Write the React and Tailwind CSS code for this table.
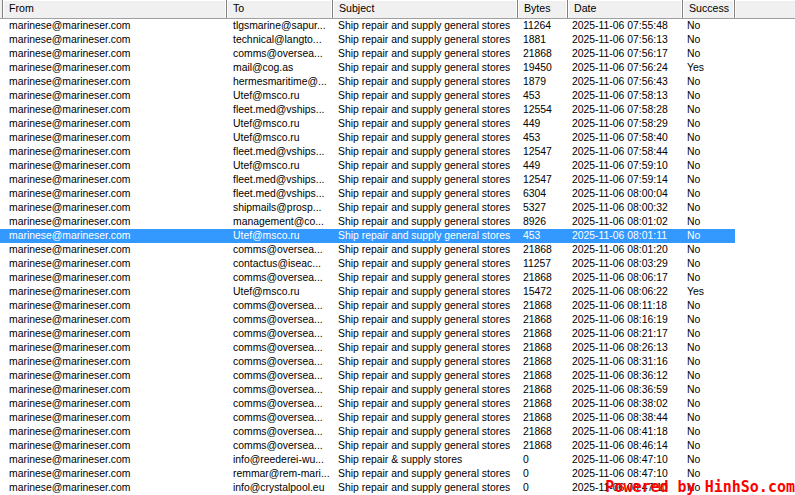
import React from "react";

const cols = [
  { key: "from", label: "From", w: "w-[224px]" },
  { key: "to", label: "To", w: "w-[106px]" },
  { key: "subject", label: "Subject", w: "w-[185px]" },
  { key: "bytes", label: "Bytes", w: "w-[50px]" },
  { key: "date", label: "Date", w: "w-[115px]" },
  { key: "ok", label: "Success", w: "w-[52px]" },
];

const SUB = "Ship repair and supply general stores";
const COMMS = "comms@oversea...";
const UTEF = "Utef@msco.ru";
const VSHIPS = "fleet.med@vships...";

const rows = [
  ["tlgsmarine@sapur...", SUB, "11264", "07:55:48", "No"],
  ["technical@langto...", SUB, "1881", "07:56:13", "No"],
  [COMMS, SUB, "21868", "07:56:17", "No"],
  ["mail@cog.as", SUB, "19450", "07:56:24", "Yes"],
  ["hermesmaritime@...", SUB, "1879", "07:56:43", "No"],
  [UTEF, SUB, "453", "07:58:13", "No"],
  [VSHIPS, SUB, "12554", "07:58:28", "No"],
  [UTEF, SUB, "449", "07:58:29", "No"],
  [UTEF, SUB, "453", "07:58:40", "No"],
  [VSHIPS, SUB, "12547", "07:58:44", "No"],
  [UTEF, SUB, "449", "07:59:10", "No"],
  [VSHIPS, SUB, "12547", "07:59:14", "No"],
  [VSHIPS, SUB, "6304", "08:00:04", "No"],
  ["shipmails@prosp...", SUB, "5327", "08:00:32", "No"],
  ["management@co...", SUB, "8926", "08:01:02", "No"],
  [UTEF, SUB, "453", "08:01:11", "No", true],
  [COMMS, SUB, "21868", "08:01:20", "No"],
  ["contactus@iseac...", SUB, "11257", "08:03:29", "No"],
  [COMMS, SUB, "21868", "08:06:17", "No"],
  [UTEF, SUB, "15472", "08:06:22", "Yes"],
  [COMMS, SUB, "21868", "08:11:18", "No"],
  [COMMS, SUB, "21868", "08:16:19", "No"],
  [COMMS, SUB, "21868", "08:21:17", "No"],
  [COMMS, SUB, "21868", "08:26:13", "No"],
  [COMMS, SUB, "21868", "08:31:16", "No"],
  [COMMS, SUB, "21868", "08:36:12", "No"],
  [COMMS, SUB, "21868", "08:36:59", "No"],
  [COMMS, SUB, "21868", "08:38:02", "No"],
  [COMMS, SUB, "21868", "08:38:44", "No"],
  [COMMS, SUB, "21868", "08:41:18", "No"],
  [COMMS, SUB, "21868", "08:46:14", "No"],
  ["info@reederei-wu...", "Ship repair & supply stores", "0", "08:47:10", "No"],
  ["remmar@rem-mari...", SUB, "0", "08:47:10", "No"],
  ["info@crystalpool.eu", SUB, "0", "08:47:10", "No"],
];

export default function App() {
  return (
    <div className="relative w-[795px] h-[495px] overflow-hidden bg-white text-[10.4px] text-black font-['Liberation_Sans',Arial,sans-serif]">
      {/* header */}
      <div className="flex h-[19px] bg-[#f0f0f0] border-b border-[#a0a0a0] text-[10.6px]">
        <div className="w-[3px] border-r border-[#808080]" />
        {cols.map((c) => (
          <div
            key={c.key}
            className={`${c.w} flex items-center pl-[6px] border-r border-[#808080] shadow-[inset_-1px_0_0_#ffffff,inset_1px_1px_0_#ffffff]`}
          >
            {c.label}
          </div>
        ))}
        <div className="flex-1 shadow-[inset_1px_1px_0_#ffffff]" />
      </div>

      {/* rows */}
      {rows.map((r, i) => (
        <div
          key={i}
          className={`flex h-[14px] items-center leading-[14px] w-[735px] ${r[5] ? "bg-[#3399ff] text-white" : ""}`}
        >
          <div className="w-[3px]" />
          <div className="w-[224px] pl-[6px] whitespace-nowrap">marinese@marineser.com</div>
          <div className="w-[106px] pl-[6px] whitespace-nowrap overflow-hidden">{r[0]}</div>
          <div className="w-[185px] pl-[5px] whitespace-nowrap overflow-hidden">{r[1]}</div>
          <div className="w-[50px] pl-[5px] whitespace-nowrap">{r[2]}</div>
          <div className="w-[115px] pl-[4px] whitespace-nowrap">2025-11-06 {r[3]}</div>
          <div className="w-[52px] pl-[4px] whitespace-nowrap">{r[4]}</div>
        </div>
      ))}

      {/* watermark */}
      <div className="absolute right-[0px] bottom-[0px] text-[#ff0000] font-bold text-[15px] leading-[16px] font-['DejaVu_Sans_Mono',monospace]">
        Powered by HinhSo.com
      </div>
    </div>
  );
}
